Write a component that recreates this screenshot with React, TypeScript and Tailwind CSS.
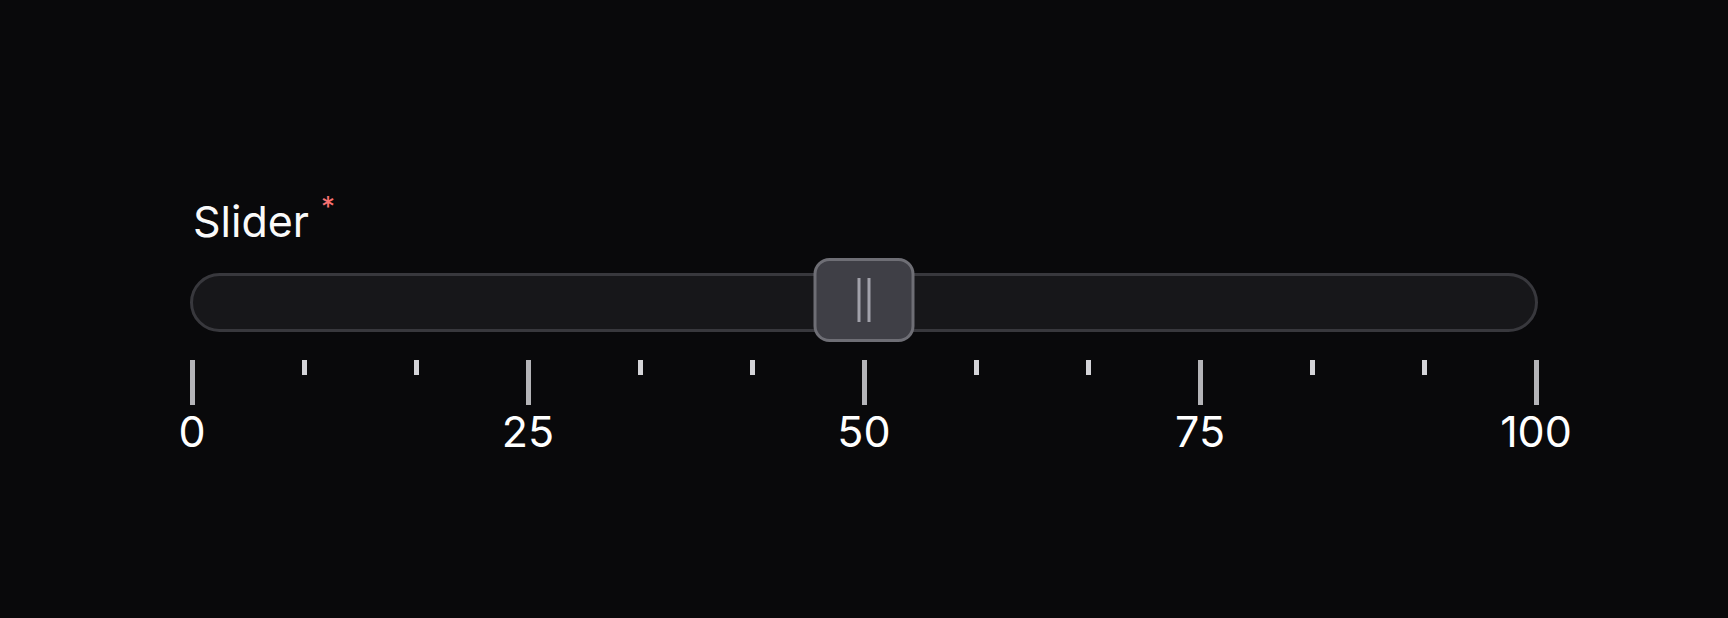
import { useState } from "react";

const ticks = Array.from({ length: 13 }, (_, i) => i);

const App = () => {
  const [value] = useState(50);

  return (
    <div
      className="min-h-[618px] w-full bg-[#09090b] px-[190px] pt-[195px] text-[#fafafa]"
      style={{ fontFamily: "Inter, 'Noto Sans', sans-serif" }}
    >
      <label className="flex items-start pl-[3px] text-[43px] leading-[52px]">
        Slider
        <span className="ml-[12px] mt-[-2px] text-[28px] leading-[28px] text-[#f87171]">*</span>
      </label>

      {/* track + thumb */}
      <div className="relative mt-[11px] flex h-[84px] items-start">
        <div className="mt-[15px] h-[59px] w-full rounded-full border-[3px] border-[#38383d] bg-[#17171a]" />
        <button
          className="absolute top-0 flex h-[84px] w-[101px] -translate-x-1/2 items-center justify-center gap-[7px] rounded-[16px] border-[3px] border-[#6e6e75] bg-[#3f3f46]"
          style={{ left: `${value}%` }}
        >
          <span className="h-[44px] w-[3px] bg-[#a1a1aa]" />
          <span className="h-[44px] w-[3px] bg-[#a1a1aa]" />
        </button>
      </div>

      {/* ticks */}
      <div className="-mx-[1px] mt-[18px] flex justify-between">
        {ticks.map((i) => {
          const major = i % 3 === 0;
          return (
            <div key={i} className="flex w-[6px] flex-col items-center">
              {major ? (
                <span className="h-[45px] w-[5px] bg-[#b4b4b8]" />
              ) : (
                <span className="h-[15px] w-[5px] bg-[#d4d4d8]" />
              )}
              {major && (
                <span className="whitespace-nowrap text-[43px] leading-[52px] text-white">
                  {(i / 12) * 100}
                </span>
              )}
            </div>
          );
        })}
      </div>
    </div>
  );
};

export default App;
